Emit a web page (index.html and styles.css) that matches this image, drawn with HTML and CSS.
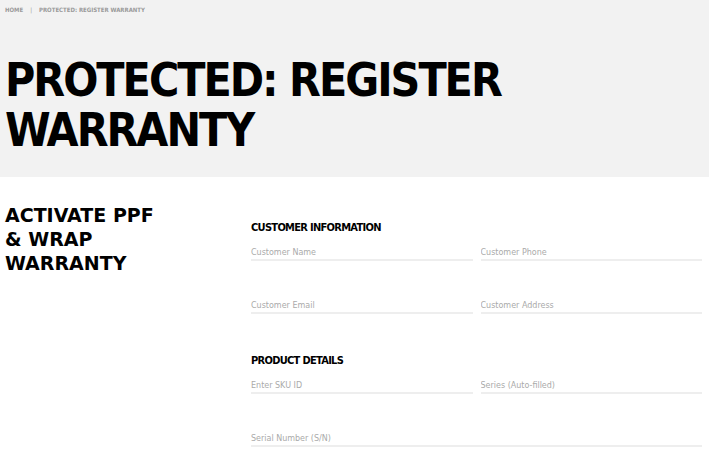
FILE: index.html
```html
<!DOCTYPE html>
<html>
<head>
<meta charset="utf-8">
<link rel="stylesheet" href="styles.css">
</head>
<body>
<header class="hero">
  <nav class="crumbs"><span>HOME</span><span class="sep">|</span><span>PROTECTED: REGISTER WARRANTY</span></nav>
  <h1 class="title">PROTECTED: REGISTER<br>WARRANTY</h1>
</header>
<main class="content">
  <h2 class="side-title">ACTIVATE PPF<br>&amp; WRAP<br>WARRANTY</h2>
  <form class="form">
    <h3 class="section">CUSTOMER INFORMATION</h3>
    <div class="grid">
      <input class="field" placeholder="Customer Name">
      <input class="field" placeholder="Customer Phone">
      <input class="field" placeholder="Customer Email">
      <input class="field" placeholder="Customer Address">
    </div>
    <h3 class="section">PRODUCT DETAILS</h3>
    <div class="grid">
      <input class="field" placeholder="Enter SKU ID">
      <input class="field" placeholder="Series (Auto-filled)">
      <input class="field wide" placeholder="Serial Number (S/N)">
    </div>
  </form>
</main>
</body>
</html>
```

FILE: styles.css
```css
* { box-sizing: border-box; }
html, body { margin: 0; padding: 0; background: #fff; }
body { font-family: "DejaVu Sans Condensed", "DejaVu Sans", sans-serif; color: #000; overflow: hidden; }

.hero { background: #f2f2f2; padding: 5px 5px 0; height: 177px; }
.crumbs { font-size: 6px; color: #9a9a9a; font-weight: bold; display: flex; gap: 7px; line-height: 9px; }
.crumbs .sep { font-weight: normal; }
.title { margin: 41px 0 0; font-size: 46px; line-height: 50px; font-weight: bold; letter-spacing: -2px; }

.content { display: grid; grid-template-columns: 246px 1fr; padding: 0 7px 0 5px; }
.side-title { margin: 26px 0 0; font-family: "DejaVu Sans", sans-serif; font-size: 19px; line-height: 24px; font-weight: bold; }
.form { padding-top: 44px; }
.section { margin: 0 0 12px; font-size: 11px; line-height: 14px; font-weight: bold; letter-spacing: -0.7px; }
.grid { display: grid; grid-template-columns: 1fr 1fr; column-gap: 8px; row-gap: 39px; margin-bottom: 40px; }
.field { border: 0; border-bottom: 2px solid #eee; background: transparent; padding: 0 0 1px; font-size: 8px; font-family: "DejaVu Sans", sans-serif; height: 14px; outline: none; }
.field.wide { grid-column: 1 / -1; }
.field::placeholder { color: #aaa; }
```
